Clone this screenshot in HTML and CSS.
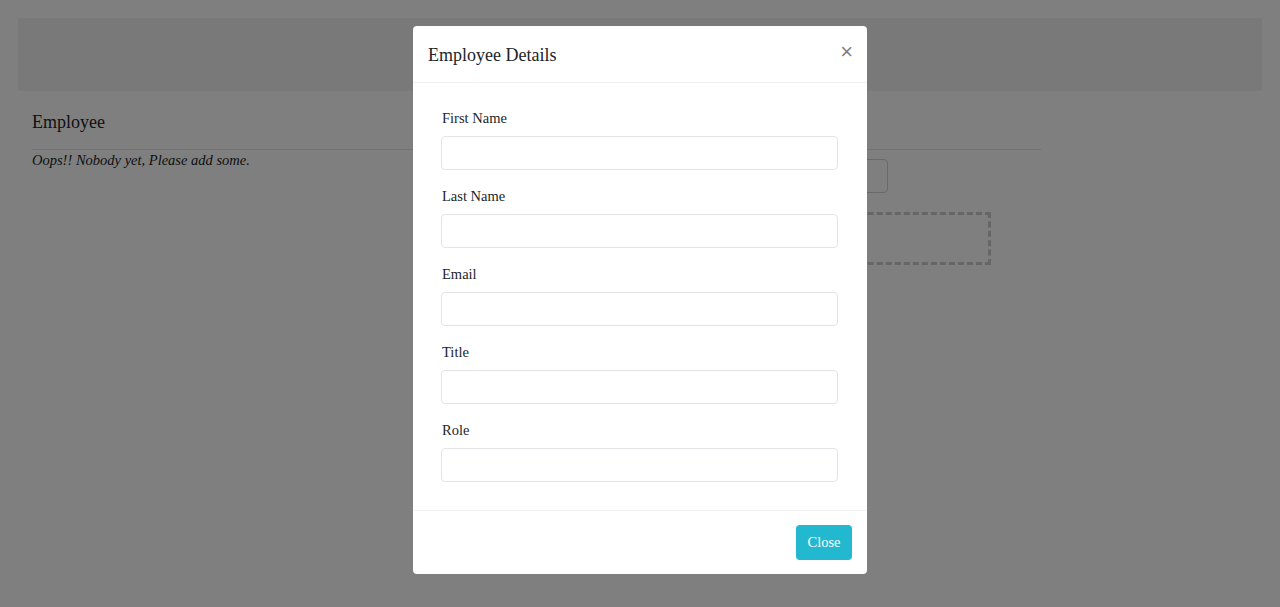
FILE: index.html
```html
<!DOCTYPE html>
<html lang="en">
<head>
<meta charset="utf-8">
<title>Employee</title>
<link rel="stylesheet" href="styles.css">
</head>
<body>
<div class="page">
  <div class="jumbotron"></div>
  <div class="content">
    <section class="list">
      <h2 class="list-title">Employee</h2>
      <hr class="divider">
      <div class="list-body">
        <p class="empty">Oops!! Nobody yet, Please add some.</p>
        <div class="side">
          <input class="side-input" type="text">
          <div class="dropzone"></div>
        </div>
      </div>
    </section>
  </div>
</div>

<div class="backdrop"></div>

<div class="modal">
  <div class="modal-header">
    <h5 class="modal-title">Employee Details</h5>
    <button class="close" type="button">&times;</button>
  </div>
  <div class="modal-body">
    <div class="form-group">
      <label class="label">First Name</label>
      <input class="input" type="text">
    </div>
    <div class="form-group">
      <label class="label">Last Name</label>
      <input class="input" type="text">
    </div>
    <div class="form-group">
      <label class="label">Email</label>
      <input class="input" type="text">
    </div>
    <div class="form-group">
      <label class="label">Title</label>
      <input class="input" type="text">
    </div>
    <div class="form-group">
      <label class="label">Role</label>
      <input class="input" type="text">
    </div>
  </div>
  <div class="modal-footer">
    <button class="btn-close" type="button">Close</button>
  </div>
</div>
</body>
</html>
```

FILE: styles.css
```css
* { box-sizing: border-box; }

html, body {
  margin: 0;
  padding: 0;
  background: #ffffff;
  font-family: "Liberation Serif", "Times New Roman", serif;
  color: #212529;
}

.page {
  padding: 18px;
}

.jumbotron {
  height: 73px;
  background: #f2f2f2;
  border-radius: 2px;
}

.content {
  padding: 0 14px;
}

.list {
  width: 1009px;
}

.list-title {
  margin: 20px 0 0;
  font-size: 18px;
  line-height: 22px;
  font-weight: normal;
}

.divider {
  margin: 16px 0 0;
  border: 0;
  border-top: 1px solid rgba(0, 0, 0, 0.1);
  height: 0;
}

.list-body {
  display: flex;
  justify-content: space-between;
}

.empty {
  margin: 0;
  font-style: italic;
  font-size: 14.5px;
  line-height: 20px;
}

.side {
  width: 430px;
  margin-right: 50px;
  display: flex;
  flex-direction: column;
}

.side-input {
  width: 327px;
  height: 34px;
  margin-top: 9px;
  border: 1px solid #ced4da;
  border-radius: 4px;
}

.dropzone {
  margin-top: 19px;
  height: 53px;
  border: 3px dashed #cccccc;
}

.backdrop {
  position: fixed;
  inset: 0;
  background: rgba(0, 0, 0, 0.5);
}

.modal {
  position: fixed;
  top: 26px;
  left: 413px;
  width: 454px;
  background: #ffffff;
  border-radius: 4px;
}

.modal-header {
  display: flex;
  align-items: flex-start;
  justify-content: space-between;
  padding: 17px 14px 15px 15px;
  border-bottom: 1px solid #f0f1f2;
}

.modal-title {
  margin: 0;
  font-size: 18px;
  line-height: 24px;
  font-weight: normal;
  color: #212529;
}

.close {
  background: none;
  border: 0;
  padding: 0;
  margin-top: -3px;
  margin-right: 0;
  font-family: "Liberation Sans", Arial, sans-serif;
  font-size: 22px;
  line-height: 24px;
  color: #000;
  opacity: 0.5;
}

.modal-body {
  padding: 24px 28px 13px;
}

.form-group {
  display: flex;
  flex-direction: column;
  margin-bottom: 15px;
}

.label {
  font-size: 14.5px;
  line-height: 22px;
  margin-bottom: 7px;
  padding-left: 1px;
  color: #212529;
}

.input {
  width: 397px;
  height: 34px;
  border: 1px solid #e2e4e7;
  border-radius: 4px;
  background: #fff;
}

.modal-footer {
  display: flex;
  justify-content: flex-end;
  padding: 14px 15px 14px;
  border-top: 1px solid #f0f1f2;
}

.btn-close {
  height: 35px;
  width: 56px;
  padding: 0;
  background: #22b8cf;
  border: 0;
  border-radius: 4px;
  color: #ffffff;
  font-family: "Liberation Serif", "Times New Roman", serif;
  font-size: 14.5px;
}
```
